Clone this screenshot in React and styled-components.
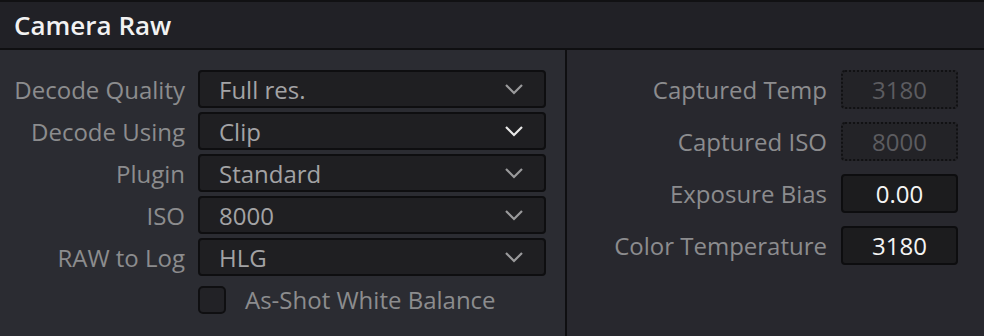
import React from "react";
import styled, { createGlobalStyle } from "styled-components";

const GlobalStyle = createGlobalStyle`
  html, body {
    margin: 0;
    padding: 0;
    background: #2a2b31;
  }
  body {
    font-family: "Open Sans", "Noto Sans", sans-serif;
  }
`;

const Panel = styled.div`
  width: 984px;
  height: 336px;
  display: flex;
  flex-direction: column;
  background: #2a2b31;
  border-top: 2px solid #111113;
  box-sizing: border-box;
  overflow: hidden;
`;

const Header = styled.div`
  height: 46px;
  display: flex;
  align-items: center;
  padding-left: 14px;
  background: #212126;
  border-bottom: 2px solid #0f0f11;
`;

const Title = styled.h2`
  margin: 0;
  font-size: 26px;
  font-weight: 600;
  color: #f2f2f2;
`;

const Body = styled.div`
  flex: 1;
  display: flex;
`;

const LeftColumn = styled.div`
  width: 567px;
  padding: 20px 0 0 0;
  box-sizing: border-box;
  display: flex;
  flex-direction: column;
  gap: 4px;
  background: #2b2c32;
  border-right: 2px solid #0f0f11;
`;

const RightColumn = styled.div`
  flex: 1;
  padding: 20px 0 0 0;
  display: flex;
  flex-direction: column;
  gap: 13px;
  background: #28282e;
`;

const Row = styled.div`
  display: flex;
  align-items: center;
  gap: ${(props) => props.gap || 13}px;
`;

const Label = styled.span`
  width: ${(props) => props.width}px;
  text-align: right;
  font-size: 24px;
  color: #8c8c8e;
  white-space: nowrap;
`;

const Dropdown = styled.div`
  width: 348px;
  height: 38px;
  box-sizing: border-box;
  display: flex;
  align-items: center;
  justify-content: space-between;
  padding: 0 20px 0 19px;
  background: #1f1f22;
  border: 2px solid #0e0e10;
  border-radius: 4px;
  font-size: 24px;
  color: #a3a3a5;
`;

const Chevron = ({ bright }) => (
  <svg width="20" height="12" viewBox="0 0 20 12">
    <path
      d="M2 2 L10 10 L18 2"
      fill="none"
      stroke={bright ? "#e8e8e8" : "#9a9a9c"}
      strokeWidth="2.2"
    />
  </svg>
);

const CheckRow = styled.div`
  display: flex;
  align-items: center;
  gap: 19px;
  margin: 6px 0 0 198px;
`;

const CheckBox = styled.span`
  width: 28px;
  height: 28px;
  box-sizing: border-box;
  background: #222226;
  border: 2px solid #0f0f11;
  border-radius: 5px;
`;

const CheckLabel = styled.span`
  font-size: 24px;
  line-height: 28px;
  color: #8c8c8e;
`;

const NumberBox = styled.div`
  width: 117px;
  height: 39px;
  box-sizing: border-box;
  display: flex;
  align-items: center;
  justify-content: center;
  font-size: 24px;
  border-radius: 4px;
  background: ${(props) => (props.disabled ? "#232327" : "#1c1c1e")};
  border: 2px ${(props) => (props.disabled ? "dotted #111113" : "solid #0d0d0f")};
  color: ${(props) => (props.disabled ? "#5c5c60" : "#f4f4f4")};
`;

const dropdowns = [
  { label: "Decode Quality", value: "Full res." },
  { label: "Decode Using", value: "Clip", bright: true },
  { label: "Plugin", value: "Standard" },
  { label: "ISO", value: "8000" },
  { label: "RAW to Log", value: "HLG" },
];

const numbers = [
  { label: "Captured Temp", value: "3180", disabled: true },
  { label: "Captured ISO", value: "8000", disabled: true },
  { label: "Exposure Bias", value: "0.00" },
  { label: "Color Temperature", value: "3180" },
];

export default function App() {
  return (
    <Panel>
      <GlobalStyle />
      <Header>
        <Title>Camera Raw</Title>
      </Header>
      <Body>
        <LeftColumn>
          {dropdowns.map((d) => (
            <Row key={d.label}>
              <Label width={185}>{d.label}</Label>
              <Dropdown>
                <span>{d.value}</span>
                <Chevron bright={d.bright} />
              </Dropdown>
            </Row>
          ))}
          <CheckRow>
            <CheckBox />
            <CheckLabel>As-Shot White Balance</CheckLabel>
          </CheckRow>
        </LeftColumn>
        <RightColumn>
          {numbers.map((n) => (
            <Row key={n.label} gap={14}>
              <Label width={260}>{n.label}</Label>
              <NumberBox disabled={n.disabled}>{n.value}</NumberBox>
            </Row>
          ))}
        </RightColumn>
      </Body>
    </Panel>
  );
}
